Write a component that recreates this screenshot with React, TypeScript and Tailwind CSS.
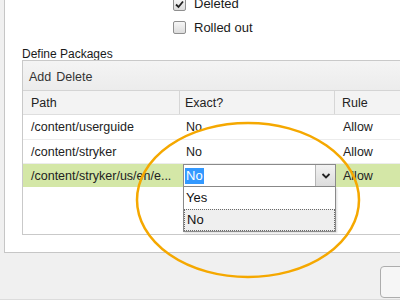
import React from "react";

function Checkbox({ checked }: { checked?: boolean }) {
  return (
    <div className="w-[13px] h-[13px] rounded-[2px] border border-[#8f8f8f] bg-gradient-to-b from-[#f7f7f7] to-[#dcdcdc] flex items-center justify-center">
      {checked && (
        <svg width="11" height="11" viewBox="0 0 11 11">
          <path d="M2 5.5 L4.5 8 L9 2.5" fill="none" stroke="#222" strokeWidth="1.8" />
        </svg>
      )}
    </div>
  );
}

export default function App() {
  const font = { fontFamily: '"Liberation Sans", Arial, sans-serif' };
  return (
    <div className="relative w-[400px] h-[300px] overflow-hidden bg-[#f0f0f0] flex flex-col" style={font}>
      {/* main panel */}
      <div className="ml-[4px] h-[253px] shrink-0 bg-white border-l border-b border-[#c6c6c6] overflow-hidden flex flex-col pl-[17px]">
        <div className="mt-[-8px] pl-[151px] flex flex-col text-[13px] text-[#1a1a1a]">
          <div className="h-[24px] flex items-center gap-[8px]">
            <Checkbox checked />
            <span>Deleted</span>
          </div>
          <div className="h-[23px] flex items-center gap-[8px]">
            <Checkbox />
            <span>Rolled out</span>
          </div>
        </div>
        <div className="mt-[9px] h-[12px] leading-[12px] text-[12px] text-[#1a1a1a]">Define Packages</div>
        <div className="w-[420px] h-[175px] shrink-0 border border-[#c9c9c9] flex flex-col text-[12.5px] text-[#222]">
          <div className="h-[30px] pt-[3px] bg-gradient-to-b from-[#f4f4f4] to-[#ececec] border-b border-[#d4d4d4] flex items-center pl-[6px] gap-[5px] text-[#333]">
            <span>Add</span>
            <span>Delete</span>
          </div>
          <div className="h-[24px] bg-[#f3f3f3] border-b border-[#dedede] flex items-center">
            <div className="w-[157px] h-full pt-[2px] flex items-center pl-[8px] border-r border-[#d6d6d6]">Path</div>
            <div className="w-[155px] h-full pt-[2px] flex items-center pl-[5px] border-r border-[#d6d6d6]">Exact?</div>
            <div className="flex-1 h-full pt-[2px] flex items-center pl-[7px]">Rule</div>
          </div>
          <div className="h-[25px] pt-[1px] border-b border-[#ececec] flex items-center">
            <div className="w-[158px] pl-[8px]">/content/userguide</div>
            <div className="w-[155px] pl-[5px]">No</div>
            <div className="flex-1 pl-[7px]">Allow</div>
          </div>
          <div className="h-[24px] pt-[1px] border-b border-[#ececec] flex items-center">
            <div className="w-[158px] pl-[8px]">/content/stryker</div>
            <div className="w-[155px] pl-[5px]">No</div>
            <div className="flex-1 pl-[7px]">Allow</div>
          </div>
          <div className="h-[23px] pt-[1px] bg-[#d4e7a7] flex items-center">
            <div className="w-[158px] pl-[8px] whitespace-nowrap overflow-hidden">/content/stryker/us/en/e...</div>
            <div className="w-[155px] pl-[5px]"></div>
            <div className="flex-1 pl-[7px]">Allow</div>
          </div>
        </div>
      </div>
      {/* bottom area */}
      <div className="flex-1 border-b border-[#dcdcdc]">
        <div className="ml-[380px] mt-[13px] w-[80px] h-[32px] rounded-[4px] border border-[#adadad] bg-[#f6f6f6]" />
      </div>

      {/* dropdown overlay */}
      <div className="absolute left-[183px] top-[164px] w-[153px] text-[13px] text-[#111]">
        <div className="h-[23px] border border-[#8a8a8a] bg-white flex items-center">
          <div className="flex-1 pl-[1px] flex items-center">
            <span className="bg-[#3399ff] text-white px-[1px] leading-[16px]">No</span>
          </div>
          <div className="w-[20px] h-full border-l border-[#b5b5b5] bg-gradient-to-b from-[#f2f2f2] to-[#dcdcdc] flex items-center justify-center">
            <svg width="10" height="8" viewBox="0 0 10 8">
              <path d="M1.5 2 L5 5.5 L8.5 2" fill="none" stroke="#222" strokeWidth="1.8" />
            </svg>
          </div>
        </div>
        <div className="border border-t-0 border-[#8a8a8a] bg-white shadow-[1px_1px_2px_rgba(0,0,0,0.15)]">
          <div className="h-[22px] flex items-center pl-[2px]">Yes</div>
          <div className="h-[22px] flex items-center pl-[2px] bg-[#efefef] border border-dotted border-[#6a6a6a]">No</div>
        </div>
      </div>

      {/* annotation ellipse */}
      <svg className="absolute left-0 top-0 pointer-events-none" width="400" height="300" viewBox="0 0 400 300">
        <ellipse cx="248" cy="200" rx="111" ry="77" fill="none" stroke="#f5a800" strokeWidth="2.5" />
      </svg>
    </div>
  );
}
